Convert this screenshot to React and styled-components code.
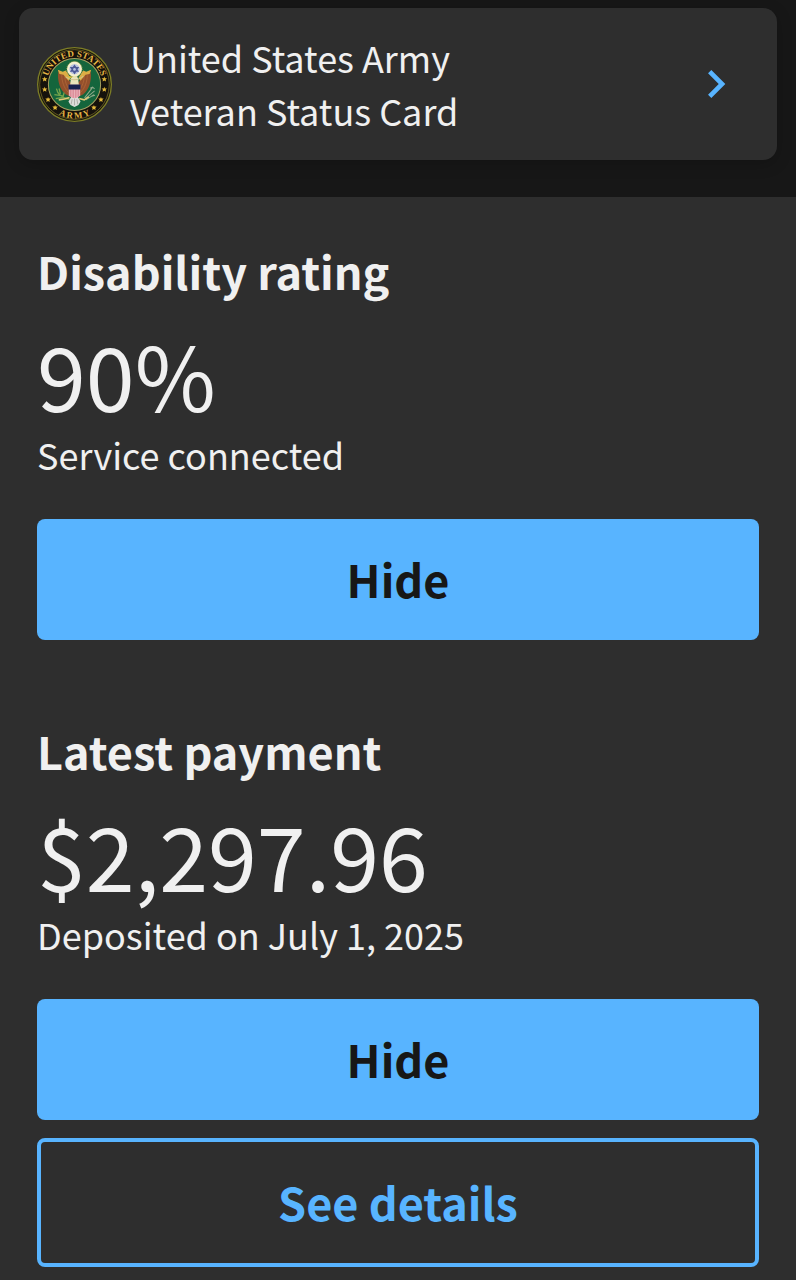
import React from 'react'
import styled, { createGlobalStyle } from 'styled-components'
import { MdChevronRight } from 'react-icons/md'

const stars = [
  [61, 134], [61, 165], [71, 195], [92, 219],
  [239, 134], [239, 165], [229, 195], [208, 219],
]

const starPath = 'M0-8 2-3 8-3 4 1 5 7 0 4-5 7-4 1-8-3-2-3z'

function ArmySeal() {
  return (
    <Seal viewBox="38 38 224 224" aria-hidden="true">
      <defs>
        <path id="seal-top" d="M67 150a83 83 0 0 1 166 0" />
        <path id="seal-bottom" d="M49 150a101 101 0 0 0 202 0" />
      </defs>
      <circle cx="150" cy="150" r="110" fill="#15120c" stroke="#7d7d26" strokeWidth="4" />
      <circle cx="150" cy="150" r="104" fill="none" stroke="#8a7b2c" strokeWidth="2" />
      <circle cx="150" cy="150" r="78" fill="#14653c" stroke="#a8a060" strokeWidth="3" />
      <SealText fontSize="27">
        <textPath href="#seal-top" startOffset="50%" textAnchor="middle">UNITED STATES</textPath>
      </SealText>
      <SealText fontSize="26">
        <textPath href="#seal-bottom" startOffset="50%" textAnchor="middle">A R M Y</textPath>
      </SealText>
      {stars.map(([x, y]) => (
        <path key={`${x}-${y}`} d={starPath} transform={`translate(${x} ${y})`} fill="#e5b93a" />
      ))}
      {/* wings */}
      <path d="M103 107c-6 20 0 52 15 67 7 8 15 10 21 10l2-36-14-22z" fill="#94502b" />
      <path d="M197 107c6 20 0 52-15 67-7 8-15 10-21 10l-2-36 14-22z" fill="#94502b" />
      <path d="M112 122c0 18 6 38 20 52M121 124c0 16 5 30 14 42M188 122c0 18-6 38-20 52M179 124c0 16-5 30-14 42" fill="none" stroke="#b56c3c" strokeWidth="2" />
      <path d="M100 106l15 6 9-4 14 22-6 9-15-18-12-2zM200 106l-15 6-9-4-14 22 6 9 15-18 12-2z" fill="#dcae45" />
      {/* olive branch and arrows */}
      <path d="M96 162c3 16 15 28 39 32M90 180l25 4M94 192l24-4M104 162l4 16M119 174l-3 12" fill="none" stroke="#74a34c" strokeWidth="4" />
      <path d="M103 196c12-1 22-3 32-7" fill="none" stroke="#e0c878" strokeWidth="5" />
      <path d="M180 190l23-30M182 193l28-24M184 196l24-16M197 161l7-3 6 5M201 185l10-3" fill="none" stroke="#8fa98a" strokeWidth="3" />
      <path d="M164 192l15 4 14-9" fill="none" stroke="#e0c878" strokeWidth="5" />
      {/* tail */}
      <path d="M140 187l-8 14 6 10 12 6 12-6 6-10-8-14z" fill="#dcdcda" />
      <path d="M143 194l-3 15M150 192v20M157 194l3 15" stroke="#9b9992" strokeWidth="2" />
      {/* head and neck */}
      <path d="M139 132l7-8h10l5 8 2 20h-26z" fill="#e9e5bb" />
      <path d="M143 129l-9 4-7-3 7-5 11 1z" fill="#e0c33f" />
      <path d="M124 127c14 12 38 12 52-2" fill="none" stroke="#cfc48a" strokeWidth="3" />
      {/* shield */}
      <path d="M133 151h34v31c-3 6-11 9-17 9s-14-3-17-9z" fill="#eab0b8" />
      <path d="M139 162v25M146 162v28M154 162v28M161 162v25" stroke="#cc6477" strokeWidth="2" />
      <path d="M132 150h36v15h-36z" fill="#18214f" />
      {/* star cloud */}
      <circle cx="150" cy="104" r="19" fill="#b9c2df" stroke="#f3efd0" strokeWidth="7" />
      <circle cx="150" cy="104" r="23" fill="none" stroke="#d5bd4d" strokeWidth="2" strokeDasharray="3 3" />
      <path d="M150 90l5 8h9l-5 7 5 7h-9l-5 8-5-8h-9l5-7-5-7h9z" fill="#4d5996" />
      <circle cx="150" cy="105" r="4" fill="#b9c2df" />
    </Seal>
  )
}

function App() {
  return (
    <>
      <GlobalStyle />
      <Header>
        <StatusCard href="#status-card">
          <ArmySeal />
          <CardText>
            United States Army
            <br />
            Veteran Status Card
          </CardText>
          <Chevron size={56} aria-hidden="true" />
        </StatusCard>
      </Header>
      <Main>
        <Section>
          <Title>Disability rating</Title>
          <Amount>90%</Amount>
          <Caption>Service connected</Caption>
          <Actions>
            <Button type="button">Hide</Button>
          </Actions>
        </Section>
        <Section>
          <Title>Latest payment</Title>
          <Amount>$2,297.96</Amount>
          <Caption>Deposited on July 1, 2025</Caption>
          <Actions>
            <Button type="button">Hide</Button>
            <Button type="button" $outline>See details</Button>
          </Actions>
        </Section>
      </Main>
    </>
  )
}

export default App

const GlobalStyle = createGlobalStyle`
* {
  box-sizing: border-box;
}
body {
  margin: 0;
  background: #2e2e2e;
  color: #f0f0f0;
  font-family: "Noto Sans CJK SC", "Noto Sans", sans-serif;
}
`
const Header = styled.header`
  padding: 8px 19px 37px;
  background: #171717;
`
const StatusCard = styled.a`
  display: flex;
  align-items: center;
  gap: 18px;
  padding: 23px 33px 23px 18px;
  border-radius: 14px;
  background: #2e2e2e;
  box-shadow: 0 4px 16px rgba(0, 0, 0, 0.2);
  color: inherit;
  text-decoration: none;
`
const Seal = styled.svg`
  flex: none;
  width: 75px;
  height: 75px;
`
const SealText = styled.text`
  fill: #e9b845;
  font-family: "Liberation Serif", serif;
  font-weight: bold;
`
const CardText = styled.span`
  flex: 1;
  font-size: 36px;
  line-height: 53px;
`
const Chevron = styled(MdChevronRight)`
  flex: none;
  color: #58b4ff;
`
const Main = styled.main`
  display: flex;
  flex-direction: column;
  gap: 80px;
  padding: 43px 37px 13px;
`
const Section = styled.section`
  display: flex;
  flex-direction: column;
`
const Title = styled.h2`
  margin: 0 0 18px;
  font-size: 45px;
  font-weight: 700;
  line-height: 62px;
`
const Amount = styled.p`
  margin: 0;
  font-size: 88px;
  line-height: 108px;
`
const Caption = styled.p`
  margin: 0;
  font-size: 36px;
  line-height: 53px;
`
const Actions = styled.div`
  display: flex;
  flex-direction: column;
  gap: 18px;
  margin-top: 38px;
`
const Button = styled.button`
  padding: 29px 16px 31px;
  border: ${(props) => (props.$outline ? '4px solid #58b4ff' : 'none')};
  border-radius: 8px;
  background: ${(props) => (props.$outline ? 'transparent' : '#58b4ff')};
  color: ${(props) => (props.$outline ? '#58b4ff' : '#171717')};
  font-family: inherit;
  font-size: 45px;
  font-weight: 700;
  line-height: 61px;
  cursor: pointer;
`
